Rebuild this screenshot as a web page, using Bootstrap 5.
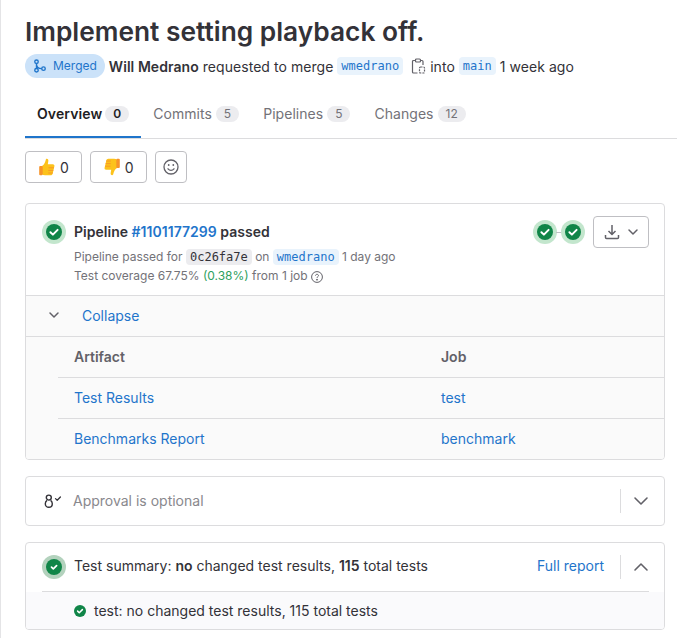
<!DOCTYPE html>
<html lang="en">
<head>
    <meta charset="UTF-8">
    <meta name="viewport" content="width=device-width, initial-scale=1.0">
    <title>Implement setting playback off.</title>
    <link href="https://cdn.jsdelivr.net/npm/bootstrap@5.3.0/dist/css/bootstrap.min.css" rel="stylesheet">
    <style>
        body { font-family: Inter, "Liberation Sans", sans-serif; font-size: 14px; color: #333238; background: #fff; overflow: hidden; }
        a { color: #1f75cb; text-decoration: none; }
        .page-wrap { height: 638px; border-left: 1px solid #e4e4e6; padding: 12px 0 0 24px; overflow: hidden; }
        .mr-title { font-size: 26.3px; font-weight: 600; line-height: 40px; margin: 0; color: #333238; }
        .mr-meta { height: 24px; margin-top: 2px; gap: 4px; white-space: nowrap; letter-spacing: .05px; }
        .state-pill { background: #cbe2f9; color: #1f75cb; border-radius: 12px; height: 24px; padding: 0 8px; font-size: 12px; gap: 6px; letter-spacing: 0; }
        .ref-chip { font-family: "DejaVu Sans Mono", "Liberation Mono", monospace; font-size: 12px; letter-spacing: 0; background: #e9f3fc; color: #1f75cb; border-radius: 4px; padding: 1px 4px; line-height: 16px; }
        .sha-chip { background: #ececef; color: #333238; }
        .mr-tabs { margin-top: 12px; height: 49px; border-bottom: 1px solid #dcdcde; }
        .mr-tab { height: 48px; padding: 1px 12px 0; color: #737278; gap: 4px; border-bottom: 2px solid transparent; letter-spacing: .04px; }
        .mr-tab.is-on { color: #1f1e24; font-weight: 600; border-bottom-color: #1f75cb; gap: 3px; letter-spacing: .1px; }
        .tab-count { background: #ececef; color: #737278; font-size: 12px; line-height: 16px; border-radius: 8px; padding: 0 8px; letter-spacing: 0; }
        .is-on .tab-count { color: #1f1e24; font-weight: 600; }
        .award-row { margin-top: 12px; gap: 8px; height: 32px; }
        .award-btn { height: 32px; border: 1px solid #bfbfc3; border-radius: 4px; background: #fff; gap: 4px; padding: 0 12px; color: #333238; font-size: 14px; }
        .smile-btn { width: 32px; padding: 0; }
        .panel-box { width: 640px; border: 1px solid #dcdcde; border-radius: 4px; background: #fff; }
        .pipe-box { margin-top: 20px; height: 257px; overflow: hidden; }
        .pipe-head { height: 92px; padding: 16px 15px 0 16px; border-bottom: 1px solid #dcdcde; }
        .pipe-info { margin-left: 8px; }
        .pipe-title { font-weight: 600; line-height: 24px; letter-spacing: .02px; }
        .pipe-title a { font-weight: 600; }
        .pipe-sub { font-size: 12px; color: #737278; line-height: 19px; white-space: nowrap; }
        .pipe-sub-first { margin-top: 3px; }
        .gain-text { color: #2da160; }
        .status-ring { width: 24px; height: 24px; flex: none; display: block; }
        .pipe-right { margin-top: -4px; }
        .dl-btn { width: 56px; height: 32px; border: 1px solid #bfbfc3; border-radius: 4px; background: #fff; margin-left: 8px; gap: 5px; padding: 0 0 0 10px; }
        .graph-link { width: 6px; height: 1px; background: #bfbfc3; margin: 0 -1px; }
        .art-zone { background: #fafafa; height: 163px; }
        .art-collapse { height: 41px; border-bottom: 1px solid #dcdcde; padding: 0 0 2px 20px; gap: 20px; }
        .art-row { height: 41px; margin-left: 32px; border-bottom: 1px solid #dcdcde; padding: 0 0 2px 16px; }
        .art-row:last-child { border-bottom: 0; height: 40px; }
        .art-col { width: 367px; }
        .art-th { font-weight: 600; color: #626168; }
        .approval-box { margin-top: 16px; height: 50px; padding: 0 11px 0 18px; }
        .muted-text { color: #89888d; margin: -1px 0 0 11px; }
        .split-line { width: 1px; height: 24px; background: #dcdcde; flex: none; }
        .big-chev { margin-left: 8px; flex: none; }
        .test-box { margin-top: 16px; height: 88px; overflow: hidden; }
        .test-head { height: 49px; margin: 0 15px 0 16px; border-bottom: 1px solid #dcdcde; }
        .test-head-text { margin-top: -3px; }
        .test-head .big-chev { margin-right: -4px; }
        .test-body { height: 37px; background: #fafafc; padding-left: 48px; gap: 8px; }
    </style>
</head>
<body>
<svg width="0" height="0" class="position-absolute">
    <defs>
        <symbol id="ok-ring" viewBox="0 0 24 24">
            <circle cx="12" cy="12" r="12" fill="#c3e6cd"/>
            <circle cx="12" cy="12" r="8" fill="#108548"/>
            <path d="M8.4 12.2l2.5 2.4 4.7-4.7" fill="none" stroke="#fff" stroke-width="2" stroke-linecap="round" stroke-linejoin="round"/>
        </symbol>
        <symbol id="ok-ring-dim" viewBox="0 0 24 24">
            <circle cx="12" cy="12" r="12" fill="#b3d2bd"/>
            <circle cx="12" cy="12" r="8" fill="#108548"/>
            <path d="M9.500 12.200l1.800 1.700 3.300-3.300" fill="none" stroke="#fff" stroke-width="1.700" stroke-linecap="round" stroke-linejoin="round"/>
        </symbol>
        <symbol id="chev-down" viewBox="0 0 16 16">
            <path d="M4 6l4 4 4-4" fill="none" stroke="#626168" stroke-width="1.500" stroke-linecap="round" stroke-linejoin="round"/>
        </symbol>
        <symbol id="thumb" viewBox="0 0 18 18">
            <path d="M8.800 .8c1.200 0 1.800 1 1.500 2.400L9.800 6.200h5c1.300 0 1.900 1 1.600 2l-1.700 7.200c-.2 1-1 1.800-2 1.800H7c-1.300 0-2.300-.4-3-1V8c2-1.200 3.200-3.500 3.700-6 .1-.7.500-1.200 1.100-1.200z" fill="#fcc21b"/>
            <rect x="1.200" y="8" width="3.500" height="9.200" rx="1" fill="#f79329"/>
            <path d="M10.500 9.800h5.400M10.300 12.400h5M10.200 15h4.600" stroke="#f79329" stroke-width=".9" fill="none"/>
        </symbol>
    </defs>
</svg>
<div class="page-wrap">
    <h1 class="mr-title">Implement setting playback off.</h1>
    <div class="mr-meta d-flex align-items-center">
        <span class="state-pill d-inline-flex align-items-center">
            <svg width="14" height="14" viewBox="0 0 16 16" fill="none" stroke="#1f75cb" stroke-width="1.600"><circle cx="4" cy="3.200" r="2"/><circle cx="4" cy="12.800" r="2"/><circle cx="12" cy="11" r="2"/><path d="M4 5.200v5.600M4 6c0 3 2 5 6 5"/></svg>
            Merged
        </span>
        <span><strong class="fw-semibold">Will Medrano</strong> requested to merge</span>
        <span class="ref-chip">wmedrano</span>
        <svg class="clip-icon ms-1" width="15" height="16" viewBox="0 0 15 16" fill="none" stroke="#626168" stroke-width="1.200"><path d="M4 2.500H2.500a1 1 0 0 0-1 1V14a1 1 0 0 0 1 1h4M10 2.500h1a1 1 0 0 1 1 1V7"/><rect x="4.500" y="1" width="5" height="3" rx="1"/><rect x="8.500" y="9" width="5" height="6" rx="1" stroke-dasharray="2 1"/></svg>
        <span>into</span>
        <span class="ref-chip">main</span>
        <span>1 week ago</span>
    </div>
    <div class="mr-tabs d-flex">
        <a class="mr-tab is-on d-flex align-items-center" href="#">Overview <span class="tab-count">0</span></a>
        <a class="mr-tab d-flex align-items-center" href="#">Commits <span class="tab-count">5</span></a>
        <a class="mr-tab d-flex align-items-center" href="#">Pipelines <span class="tab-count">5</span></a>
        <a class="mr-tab d-flex align-items-center" href="#">Changes <span class="tab-count">12</span></a>
    </div>
    <div class="award-row d-flex">
        <button class="award-btn d-flex align-items-center" type="button">
            <svg width="18" height="18"><use href="#thumb"/></svg>
            <span>0</span>
        </button>
        <button class="award-btn d-flex align-items-center" type="button">
            <svg width="18" height="18" viewBox="0 0 18 18"><g transform="rotate(180 9 9)"><use href="#thumb" width="18" height="18"/></g></svg>
            <span>0</span>
        </button>
        <button class="award-btn smile-btn d-flex align-items-center justify-content-center" type="button" aria-label="Add reaction">
            <svg width="16" height="16" viewBox="0 0 16 16" fill="none" stroke="#626168" stroke-width="1.300"><circle cx="8" cy="8" r="7"/><path d="M5 9.800c.8 1 1.800 1.500 3 1.500s2.200-.5 3-1.500" stroke-linecap="round"/><circle cx="5.700" cy="6" r=".9" fill="#626168" stroke="none"/><circle cx="10.300" cy="6" r=".9" fill="#626168" stroke="none"/></svg>
        </button>
    </div>

    <div class="panel-box pipe-box">
        <div class="pipe-head d-flex">
            <svg class="status-ring"><use href="#ok-ring"/></svg>
            <div class="pipe-info flex-grow-1">
                <div class="pipe-title">Pipeline <a href="#">#1101177299</a> passed</div>
                <div class="pipe-sub pipe-sub-first">Pipeline passed for <span class="ref-chip sha-chip">0c26fa7e</span> on <span class="ref-chip">wmedrano</span> 1 day ago</div>
                <div class="pipe-sub">Test coverage 67.75% <span class="gain-text">(0.38%)</span> from 1 job
                    <svg width="12" height="12" viewBox="0 0 12 12" fill="none" stroke="#626168"><circle cx="6" cy="6" r="5.400"/><path d="M4.500 4.700C4.500 3.800 5.200 3.300 6 3.300s1.500.5 1.500 1.300c0 1.100-1.500 1.100-1.500 2.300"/><circle cx="6" cy="8.700" r=".5" fill="#626168"/></svg>
                </div>
            </div>
            <div class="pipe-right d-flex align-items-center align-self-start">
                <svg class="status-ring"><use href="#ok-ring"/></svg>
                <span class="graph-link"></span>
                <svg class="status-ring"><use href="#ok-ring"/></svg>
                <button class="dl-btn d-flex align-items-center" type="button" aria-label="Download">
                    <svg width="16" height="16" viewBox="0 0 16 16" fill="none" stroke="#626168" stroke-width="1.500"><path d="M8 1v9M4.500 7L8 10.500 11.500 7M1.500 11v2.500a1 1 0 0 0 1 1h11a1 1 0 0 0 1-1V11" stroke-linejoin="round"/></svg>
                    <svg width="16" height="16"><use href="#chev-down"/></svg>
                </button>
            </div>
        </div>
        <div class="art-zone">
            <div class="art-collapse d-flex align-items-center">
                <svg width="16" height="16"><use href="#chev-down"/></svg>
                <a href="#">Collapse</a>
            </div>
            <div class="art-row d-flex align-items-center art-th"><div class="art-col">Artifact</div><div>Job</div></div>
            <div class="art-row d-flex align-items-center"><div class="art-col"><a href="#">Test Results</a></div><div><a href="#">test</a></div></div>
            <div class="art-row d-flex align-items-center"><div class="art-col"><a href="#">Benchmarks Report</a></div><div><a href="#">benchmark</a></div></div>
        </div>
    </div>

    <div class="panel-box approval-box d-flex align-items-center">
        <svg width="18" height="16" viewBox="0 0 18 16" fill="none" stroke="#333238" stroke-width="1.400"><circle cx="4.800" cy="4.600" r="2.500"/><path d="M3 7.400C1.800 8.200 1.300 9.300 1.300 10.700c0 2 1.500 3.600 3.500 3.600s3.500-1.600 3.500-3.600c0-1.400-.5-2.500-1.700-3.300"/><path d="M11.500 5.600l1.700 1.600 3.200-3.200" stroke-width="1.300" stroke-linecap="round" stroke-linejoin="round"/></svg>
        <span class="muted-text">Approval is optional</span>
        <span class="ms-auto split-line"></span>
        <svg class="big-chev" width="24" height="24" viewBox="0 0 24 24" fill="none" stroke="#626168" stroke-width="1.600" stroke-linecap="round" stroke-linejoin="round"><path d="M6 9l6 6 6-6"/></svg>
    </div>

    <div class="panel-box test-box">
        <div class="test-head d-flex align-items-center">
            <svg class="status-ring me-2"><use href="#ok-ring-dim"/></svg>
            <span class="test-head-text">Test summary: <strong class="fw-semibold">no</strong> changed test results, <strong class="fw-semibold">115</strong> total tests</span>
            <a class="ms-auto test-head-text" href="#">Full report</a>
            <span class="split-line ms-3"></span>
            <svg class="big-chev" width="24" height="24" viewBox="0 0 24 24" fill="none" stroke="#626168" stroke-width="1.600" stroke-linecap="round" stroke-linejoin="round"><path d="M6 15l6-6 6 6"/></svg>
        </div>
        <div class="test-body d-flex align-items-center">
            <svg width="12" height="12" viewBox="0 0 16 16"><circle cx="8" cy="8" r="8" fill="#108548"/><path d="M4.800 8.200l2.200 2.200 4.200-4.200" fill="none" stroke="#fff" stroke-width="2" stroke-linecap="round" stroke-linejoin="round"/></svg>
            <span>test: no changed test results, 115 total tests</span>
        </div>
    </div>
</div>
<script src="https://cdn.jsdelivr.net/npm/bootstrap@5.3.0/dist/js/bootstrap.bundle.min.js"></script>
</body>
</html>
